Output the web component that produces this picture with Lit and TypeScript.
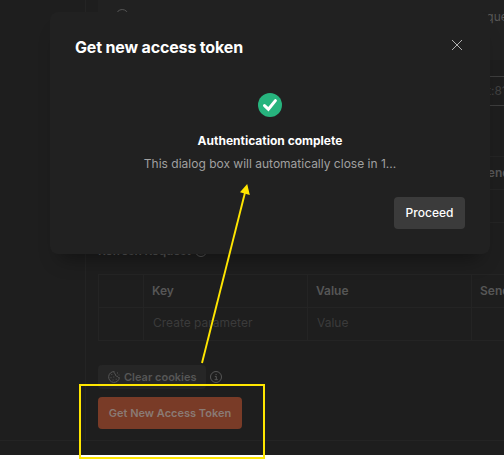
import { LitElement, html, css, svg } from "lit";
import { customElement } from "lit/decorators.js";

const infoIcon = svg`<svg class="info" width="12" height="12" viewBox="0 0 12 12" fill="none" stroke="currentColor">
  <circle cx="6" cy="6" r="5.5"/><path d="M4.8 5.4H6.3V8.6M4.6 8.7H7.8M5.5 3.4H6.7"/></svg>`;

@customElement("app-root")
export class AppRoot extends LitElement {
  static styles = css`
    :host { display: block; position: relative; width: 504px; height: 459px; overflow: hidden; background: #fff;
      font: 12px/16px Inter, sans-serif; color: #565656; }
    * { box-sizing: border-box; }
    svg { display: block; flex: none; }
    .page { height: 455px; background: #1e1e1e; display: flex; flex-direction: column; overflow: hidden; }
    .body { height: 441px; display: flex; border-bottom: 1px solid #242424; }
    .side { width: 86px; flex: none; border-right: 1px solid #242424; }
    .main { width: 418px; padding-left: 12px; display: flex; flex-direction: column; overflow: hidden; }
    .notice { height: 60px; flex: none; background: #212121; display: flex; justify-content: space-between; padding: 9px 0 0 18px; white-space: nowrap; }
    .notice span { width: 29px; }
    .field { height: 30px; flex: none; margin-top: 16px; border: 1px solid #3d3d3d; border-right: 0; padding: 6px 0 0 388px; color: #404040; white-space: nowrap; }
    .grid { width: 420px; flex: none; display: grid; grid-template-columns: 45px 164px 164px 47px; grid-auto-rows: 33px; border-top: 1px solid #242424; }
    .grid.upper { margin-top: 50px; }
    .grid.lower { margin-top: 15px; }
    .cell { border-left: 1px solid #242424; border-bottom: 1px solid #242424; padding: 8px 0 0 8px; font-weight: 600; white-space: nowrap; overflow: hidden; }
    .cell.empty { font-weight: 400; color: #3b3b3b; padding: 7px 0 0 9px; }
    .label { height: 16px; margin-top: 20px; flex: none; display: flex; align-items: center; gap: 4px; font-weight: 600; letter-spacing: -.2px; }
    .cookies { display: flex; align-items: center; gap: 4px; margin-top: 24px; }
    .clear { width: 108px; height: 24px; border-radius: 4px; background: #262626; color: #565656; display: flex; align-items: center; padding-left: 10px; gap: 4px; font-size: 11px; font-weight: 600; white-space: nowrap; }
    .token { width: 144px; height: 32px; flex: none; margin-top: 8px; border-radius: 4px; background: #793b27; color: #8a7a74; display: flex; align-items: center; justify-content: center; font-size: 11px; font-weight: 600; white-space: nowrap; }
    .dialog { position: absolute; left: 50px; top: 12px; width: 440px; height: 242px; border-radius: 8px; background: #212121;
      box-shadow: 0 14px 18px -10px rgba(0,0,0,.4); display: flex; flex-direction: column; padding: 24px 25px 25px; }
    .head { height: 24px; display: flex; justify-content: space-between; }
    .title { font-size: 16px; line-height: 22px; font-weight: 650; color: #fff; letter-spacing: -.16px; }
    .close { margin: 3px 2px 0 0; }
    .status { display: flex; flex-direction: column; align-items: center; margin-top: 33px; }
    .done { color: #fff; font-weight: 650; margin-top: 16px; }
    .sub { color: #a0a0a0; margin-top: 7px; }
    .proceed { width: 71px; height: 32px; margin: auto 0 0 auto; border-radius: 4px; background: #3b3b3b; color: #fff; font-weight: 500; display: flex; align-items: center; justify-content: center; }
    .marks { position: absolute; left: 0; top: 0; }
  `;

  render() {
    return html`
      <div class="page"><div class="body">
        <div class="side"></div>
        <div class="main">
          <div class="notice">
            <svg width="13" height="13" viewBox="0 0 13 13" fill="none" stroke="currentColor"><circle cx="6.2" cy="6.5" r="6"/></svg>
            <span>requests</span>
          </div>
          <div class="field">t:8118</div>
          <div class="grid upper">
            <div class="cell"></div><div class="cell"></div><div class="cell"></div><div class="cell">Send</div>
            <div class="cell"></div><div class="cell"></div><div class="cell"></div><div class="cell"></div>
          </div>
          <div class="label">Refresh Request ${infoIcon}</div>
          <div class="grid lower">
            <div class="cell"></div><div class="cell">Key</div><div class="cell">Value</div><div class="cell">Send</div>
            <div class="cell"></div><div class="cell empty">Create parameter</div><div class="cell empty">Value</div><div class="cell"></div>
          </div>
          <div class="cookies">
            <div class="clear">
              <svg width="12" height="12" viewBox="0 0 12 12" fill="none" stroke="currentColor"><path d="M6.2.6A5.4 5.4 0 1 0 11.4 6.6C10.4 6.8 9.6 6.2 9.4 5.2 8 5.5 6.9 4.3 7.4 3 6.4 2.7 5.9 1.6 6.2.6Z"/><path d="M3.3 3.6H4.3M2.5 6.7H3.5M5.3 6H6.3M4.6 9H5.6M7.7 8.2H8.7M9 2H10M10.6 4H11.4"/></svg>
              <span>Clear cookies</span>
            </div>
            ${infoIcon}
          </div>
          <div class="token">Get New Access Token</div>
        </div>
      </div></div>
      <div class="dialog">
        <div class="head"><div class="title">Get new access token</div>
          <svg class="close" width="12" height="12" viewBox="0 0 12 12" stroke="#b0b0b0" stroke-width="1"><path d="M1 1L11 11M11 1L1 11"/></svg></div>
        <div class="status">
          <svg width="24" height="24" viewBox="0 0 24 24" fill="none"><circle cx="12" cy="12" r="12" fill="#27b47e"/><path d="M6.5 12.6L10.4 16.2L17.4 7.6" stroke="#fff" stroke-width="3" stroke-linecap="round"/></svg>
          <div class="done">Authentication complete</div>
          <div class="sub">This dialog box will automatically close in 1...</div>
        </div>
        <div class="proceed">Proceed</div>
      </div>
      <svg class="marks" width="504" height="459" viewBox="0 0 504 459" fill="none" stroke="#ffe600">
        <path d="M202 363L244.9 193" stroke-width="1.9"/><path d="M247.2 184L240 192.3L249.8 194.9Z" fill="#ffe600" stroke="none"/>
        <rect x="80" y="385" width="184" height="73" stroke-width="2"/>
      </svg>`;
  }
}
